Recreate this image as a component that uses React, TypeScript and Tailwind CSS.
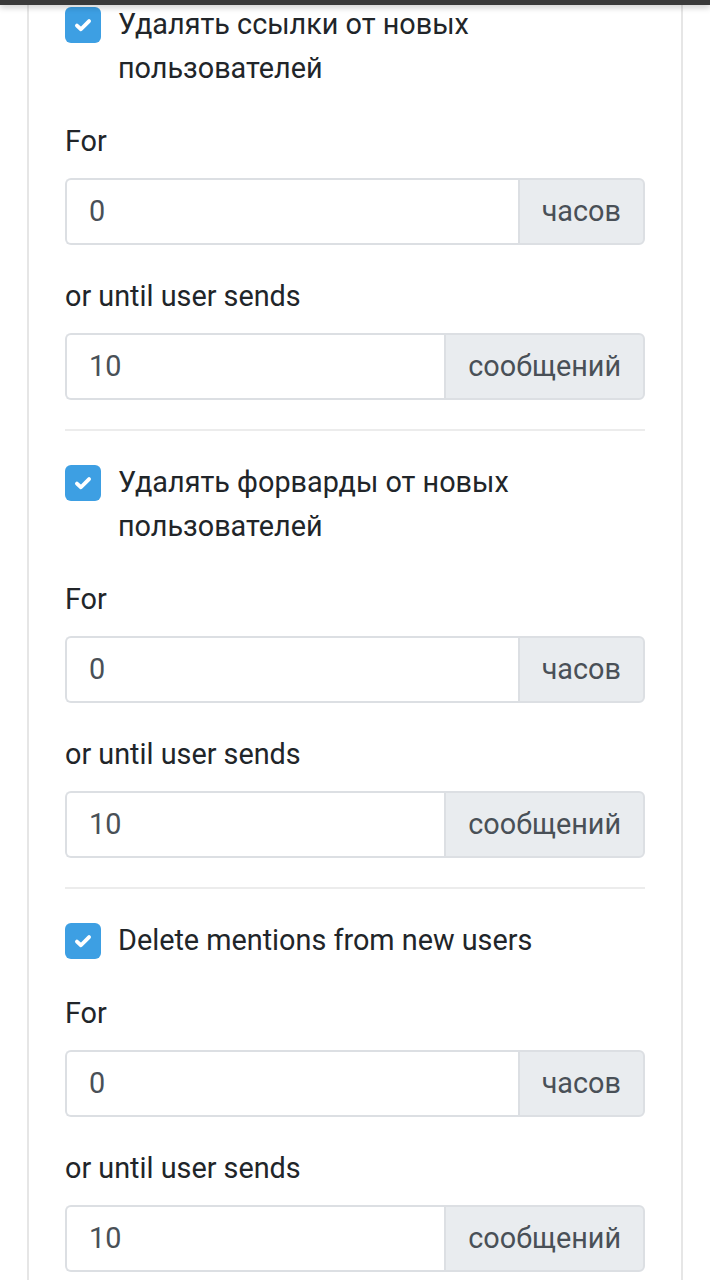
const sections = [
  { label: 'Удалять ссылки от новых пользователей' },
  { label: 'Удалять форварды от новых пользователей' },
  { label: 'Delete mentions from new users' },
]

function Checkbox() {
  return (
    <span className="mt-[5px] flex h-[36px] w-[36px] shrink-0 items-center justify-center rounded-[6px] bg-[#3d9fe3]">
      <svg viewBox="0 0 16 16" className="h-[22px] w-[22px]" fill="none">
        <path d="M3.6 8.4l2.9 2.7L12.4 5.2" stroke="white" strokeWidth="2.8" strokeLinecap="round" strokeLinejoin="round" />
      </svg>
    </span>
  )
}

function AddonInput({ value, addon }: { value: string; addon: string }) {
  return (
    <div className="flex h-[67px] w-full">
      <div className="flex flex-1 items-center rounded-l-[6px] border-2 border-r-0 border-[#dcdfe3] bg-white px-[22px] text-[#495057]">
        {value}
      </div>
      <div className="flex items-center rounded-r-[6px] border-2 border-[#dcdfe3] bg-[#e9ecef] px-[22px] text-[#495057]">
        {addon}
      </div>
    </div>
  )
}

function Field({ label, value, addon }: { label: string; value: string; addon: string }) {
  return (
    <div className="mt-[29px]">
      <div className="mb-[15px] leading-[44px] text-[#212529]">{label}</div>
      <AddonInput value={value} addon={addon} />
    </div>
  )
}

export default function App() {
  return (
    <div className="relative min-h-[1280px] overflow-hidden bg-white text-[28.8px]" style={{ fontFamily: 'Roboto, "Noto Sans", sans-serif' }}>
      <div className="absolute left-0 right-0 top-0 z-10 h-[5px] bg-[#3a3a3a] shadow-[0_2px_6px_rgba(0,0,0,0.25)]" />
      <div className="mx-[27px] min-h-[1280px] border-x-2 border-[#e6e6e6] px-[36px] pt-[2px]">
        {sections.map((s, i) => (
          <div key={i}>
            {i > 0 && <div className="my-[29px] h-[2px] bg-[#ececec]" />}
            <label className="flex items-start gap-[17px]">
              <Checkbox />
              <span className="leading-[44px] text-[#212529]">{s.label}</span>
            </label>
            <Field label="For" value="0" addon="часов" />
            <Field label="or until user sends" value="10" addon="сообщений" />
          </div>
        ))}
      </div>
    </div>
  )
}
